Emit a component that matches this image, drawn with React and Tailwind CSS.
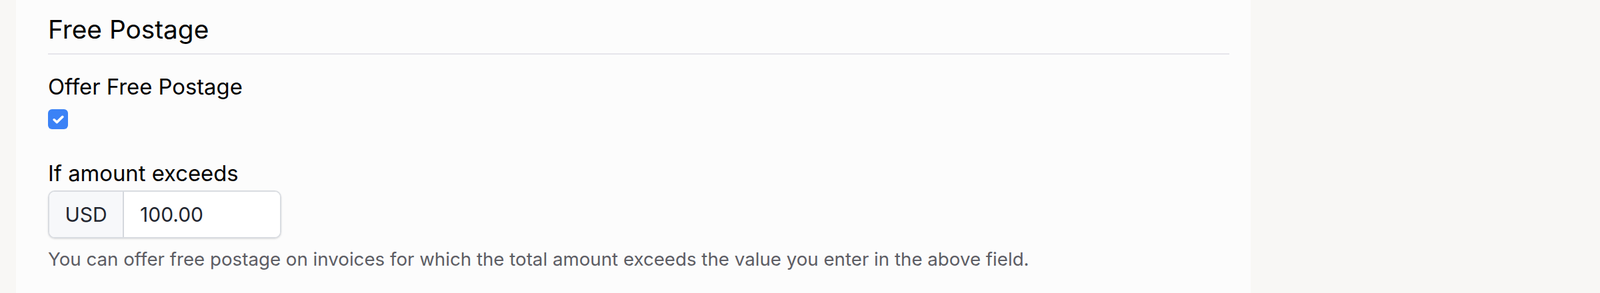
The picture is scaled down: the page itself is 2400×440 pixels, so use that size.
import React, { useState } from "react";

export default function App() {
  const [offer, setOffer] = useState(true);
  const [amount, setAmount] = useState("100.00");

  return (
    <div
      className="min-h-[440px] bg-[#f8f7f5] pl-[24px] flex"
      style={{ fontFamily: "Inter, 'Noto Sans', sans-serif" }}
    >
      <div className="w-[1852px] min-h-[440px] bg-[#fcfcfc] pl-[48px] pr-[32px] pt-[20px]">
        <h2 className="text-[38.8px] leading-[47px] text-black pb-[13px] border-b-2 border-[#e6e5eb]">
          Free Postage
        </h2>

        <div className="mt-[29px]">
          <label className="block text-[32.8px] leading-[38px] text-black">
            Offer Free Postage
          </label>
          <button
            type="button"
            onClick={() => setOffer(!offer)}
            className={`mt-[15px] w-[30px] h-[30px] rounded-[6px] flex items-center justify-center ${
              offer ? "bg-[#3b82f6]" : "bg-white border border-[#d1d5db]"
            }`}
          >
            {offer && (
              <svg width="17" height="13" viewBox="0 0 17 13" fill="none">
                <path
                  d="M2.2 6.8 L6.3 10.6 L14.8 2.4"
                  stroke="white"
                  strokeWidth="3.6"
                  strokeLinecap="round"
                  strokeLinejoin="round"
                />
              </svg>
            )}
          </button>
        </div>

        <div className="mt-[47px]">
          <label className="block text-[32.8px] leading-[38px] text-black">
            If amount exceeds
          </label>
          <div className="mt-[7px] flex w-[350px] h-[72px] rounded-[10px] border-2 border-[#d9dce1] overflow-hidden shadow-sm">
            <span className="w-[112px] flex items-center justify-center bg-[#f7f8fa] border-r-2 border-[#d4d7dd] text-[30px] text-[#222630]">
              USD
            </span>
            <input
              value={amount}
              onChange={(e) => setAmount(e.target.value)}
              className="flex-1 min-w-0 bg-white pl-[24px] text-[30px] text-[#222630] outline-none"
            />
          </div>
          <p className="mt-[16px] text-[27.7px] leading-[30px] text-[#5c5d64]">
            You can offer free postage on invoices for which the total amount
            exceeds the value you enter in the above field.
          </p>
        </div>
      </div>
    </div>
  );
}
